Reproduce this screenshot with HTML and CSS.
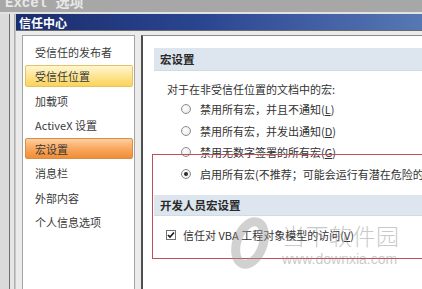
FILE: index.html
```html
<!DOCTYPE html>
<html lang="zh-CN">
<head>
<meta charset="utf-8">
<title>信任中心</title>
<link rel="stylesheet" href="styles.css">
</head>
<body>
<div class="screen">
  <div class="outer-title"><span>Excel 选项</span></div>
  <div class="outer-body">
    <div class="outer-frame"></div>
    <div class="dialog">
      <div class="dialog-title">信任中心</div>
      <div class="dialog-body">
        <nav class="nav">
          <div class="nav-item">受信任的发布者</div>
          <div class="nav-item hover">受信任位置</div>
          <div class="nav-item">加载项</div>
          <div class="nav-item">ActiveX 设置</div>
          <div class="nav-item active">宏设置</div>
          <div class="nav-item">消息栏</div>
          <div class="nav-item">外部内容</div>
          <div class="nav-item">个人信息选项</div>
        </nav>
        <main class="content">
          <div class="section-head">宏设置</div>
          <div class="intro">对于在非受信任位置的文档中的宏:</div>
          <div class="options">
            <div class="option"><span class="radio"></span><span>禁用所有宏，并且不通知(<u>L</u>)</span></div>
            <div class="option"><span class="radio"></span><span>禁用所有宏，并发出通知(<u>D</u>)</span></div>
            <div class="option"><span class="radio"></span><span>禁用无数字签署的所有宏(<u>G</u>)</span></div>
            <div class="option"><span class="radio checked"></span><span class="nowrap">启用所有宏(不推荐；可能会运行有潜在危险的代码)(<u>E</u>)</span></div>
          </div>
          <div class="section-head dev">开发人员宏设置</div>
          <div class="check-row">
            <span class="checkbox"><svg viewBox="0 0 8 8" width="8" height="8"><path d="M1 4 L3 6 L7 1.5" fill="none" stroke="#1a1a1a" stroke-width="1.6"/></svg></span>
            <span>信任对 VBA 工程对象模型的访问(<u>V</u>)</span>
          </div>
        </main>
      </div>
    </div>
  </div>
  <div class="mark-box"></div>
  <div class="watermark">
    <svg class="wm-logo" viewBox="0 0 40 60" width="40" height="60"><ellipse cx="20" cy="30" rx="13" ry="22" fill="none" stroke="#9a9a9a" stroke-width="9" transform="rotate(20 20 30)"/></svg>
    <div class="wm-text">
      <div class="wm-name">当下软件园</div>
      <div class="wm-url">www.downxia.com</div>
    </div>
  </div>
</div>
</body>
</html>
```
FILE: styles.css
```css
* { box-sizing: border-box; }
html, body { margin: 0; padding: 0; }
body {
  width: 422px;
  height: 289px;
  overflow: hidden;
  background: #dcdcdc;
  font-family: "Noto Sans CJK SC", "Noto Sans", sans-serif;
  color: #333;
}
.screen {
  position: relative;
  width: 422px;
  height: 300px;
  display: flex;
  flex-direction: column;
}
.outer-title {
  height: 12px;
  flex: none;
  background: #a7a7a7;
  overflow: hidden;
  padding-left: 5px;
}
.outer-title span {
  display: block;
  margin-top: -5px;
  font: bold 14px/16px "Liberation Mono", "Noto Sans CJK SC", monospace;
  color: #e8e8e8;
}
.outer-body {
  flex: 1;
  display: flex;
  padding-top: 2px;
  background: #e2e2e2;
  min-height: 0;
}
.outer-frame {
  width: 15px;
  flex: none;
  background: linear-gradient(to right, #dadada 0 9px, #6e6e6e 9px 10px, #e6e6e6 10px 14px, #b0b0b0 14px 15px);
}
.dialog {
  flex: 1;
  display: flex;
  flex-direction: column;
  border-left: 1px solid #c8c8c8;
  min-width: 0;
}
.dialog-title {
  height: 17px;
  flex: none;
  background: linear-gradient(to right, #1a2d6c, #2a4590 45%, #5777b4);
  color: #fff;
  font-weight: bold;
  font-size: 12px;
  line-height: 17px;
  padding-left: 3px;
  border-bottom: 1px solid #6a6a6a;
}
.dialog-body {
  flex: 1;
  display: flex;
  gap: 6px;
  padding: 4px 0 0 6px;
  background: #ebebeb;
  min-height: 0;
}
.nav {
  width: 113px;
  flex: none;
  background: #fff;
  border: 1px solid #a4a4a4;
  padding-top: 5px;
  display: flex;
  flex-direction: column;
  gap: 3px;
}
.nav-item {
  height: 21.3px;
  flex: none;
  line-height: 19.3px;
  margin: 0 1px 0 2px;
  padding: 1px 0 0 9px;
  border: 1px solid transparent;
  border-radius: 2px;
  font-size: 11px;
  color: #3a3a3a;
  white-space: nowrap;
}
.nav-item.hover {
  background: linear-gradient(#fff6d2, #fde594 50%, #f9d35a);
  border-color: #e6c262;
}
.nav-item.active {
  background: linear-gradient(#fcd0a0, #f9a860 50%, #f08e34);
  border-color: #d98d48;
}
.content {
  flex: none;
  width: 300px;
  background: #fff;
  border: 1px solid #8c8c8c;
  border-left: 2px solid #4e4e4e;
  padding: 12px 0 0 11px;
  font-size: 11px;
  color: #333;
}
.section-head {
  height: 23px;
  background: #dde6ef;
  border-bottom: 1px solid #d2dbe4;
  font-weight: bold;
  font-size: 11.5px;
  line-height: 23px;
  padding-left: 6px;
  color: #2a2a2a;
}
.intro {
  margin: 10px 0 0 13px;
  line-height: 17px;
}
.options { margin-left: 27px; }
.option {
  height: 21.7px;
  display: flex;
  align-items: center;
  gap: 9px;
  white-space: nowrap;
}
.radio {
  width: 10px;
  height: 10px;
  flex: none;
  border: 1px solid #8d8d8d;
  border-radius: 50%;
  background: radial-gradient(circle at 40% 40%, #ffffff, #e4e4e4);
  display: flex;
  align-items: center;
  justify-content: center;
}
.radio.checked::after {
  content: "";
  width: 4px;
  height: 4px;
  border-radius: 50%;
  background: #2a2a2a;
}
.section-head.dev {
  margin-top: 10px;
  height: 21px;
  line-height: 21px;
}
.check-row {
  margin: 9px 0 0 12px;
  height: 20px;
  display: flex;
  align-items: center;
  gap: 7px;
  white-space: nowrap;
}
.checkbox {
  width: 10px;
  height: 10px;
  flex: none;
  border: 1px solid #707070;
  background: #fff;
  display: flex;
  align-items: center;
  justify-content: center;
}
.checkbox svg { display: block; }
.mark-box {
  position: absolute;
  left: 152px;
  top: 154px;
  width: 300px;
  height: 105px;
  border: 1px solid #c24c58;
  pointer-events: none;
}
.watermark {
  position: absolute;
  left: 230px;
  top: 213px;
  display: flex;
  align-items: flex-start;
  gap: 12px;
  opacity: 0.45;
  pointer-events: none;
}
.wm-logo { display: block; }
.wm-text { padding-top: 9px; }
.wm-name {
  font-family: "Noto Sans CJK SC", sans-serif;
  font-weight: 300;
  font-size: 23px;
  line-height: 26px;
  color: #8a8a8a;
  letter-spacing: 0.5px;
}
.wm-url {
  font-family: "Liberation Sans", sans-serif;
  font-size: 14px;
  line-height: 18px;
  color: #8a8a8a;
  margin-top: 2px;
}
u { text-decoration: underline; }
```
